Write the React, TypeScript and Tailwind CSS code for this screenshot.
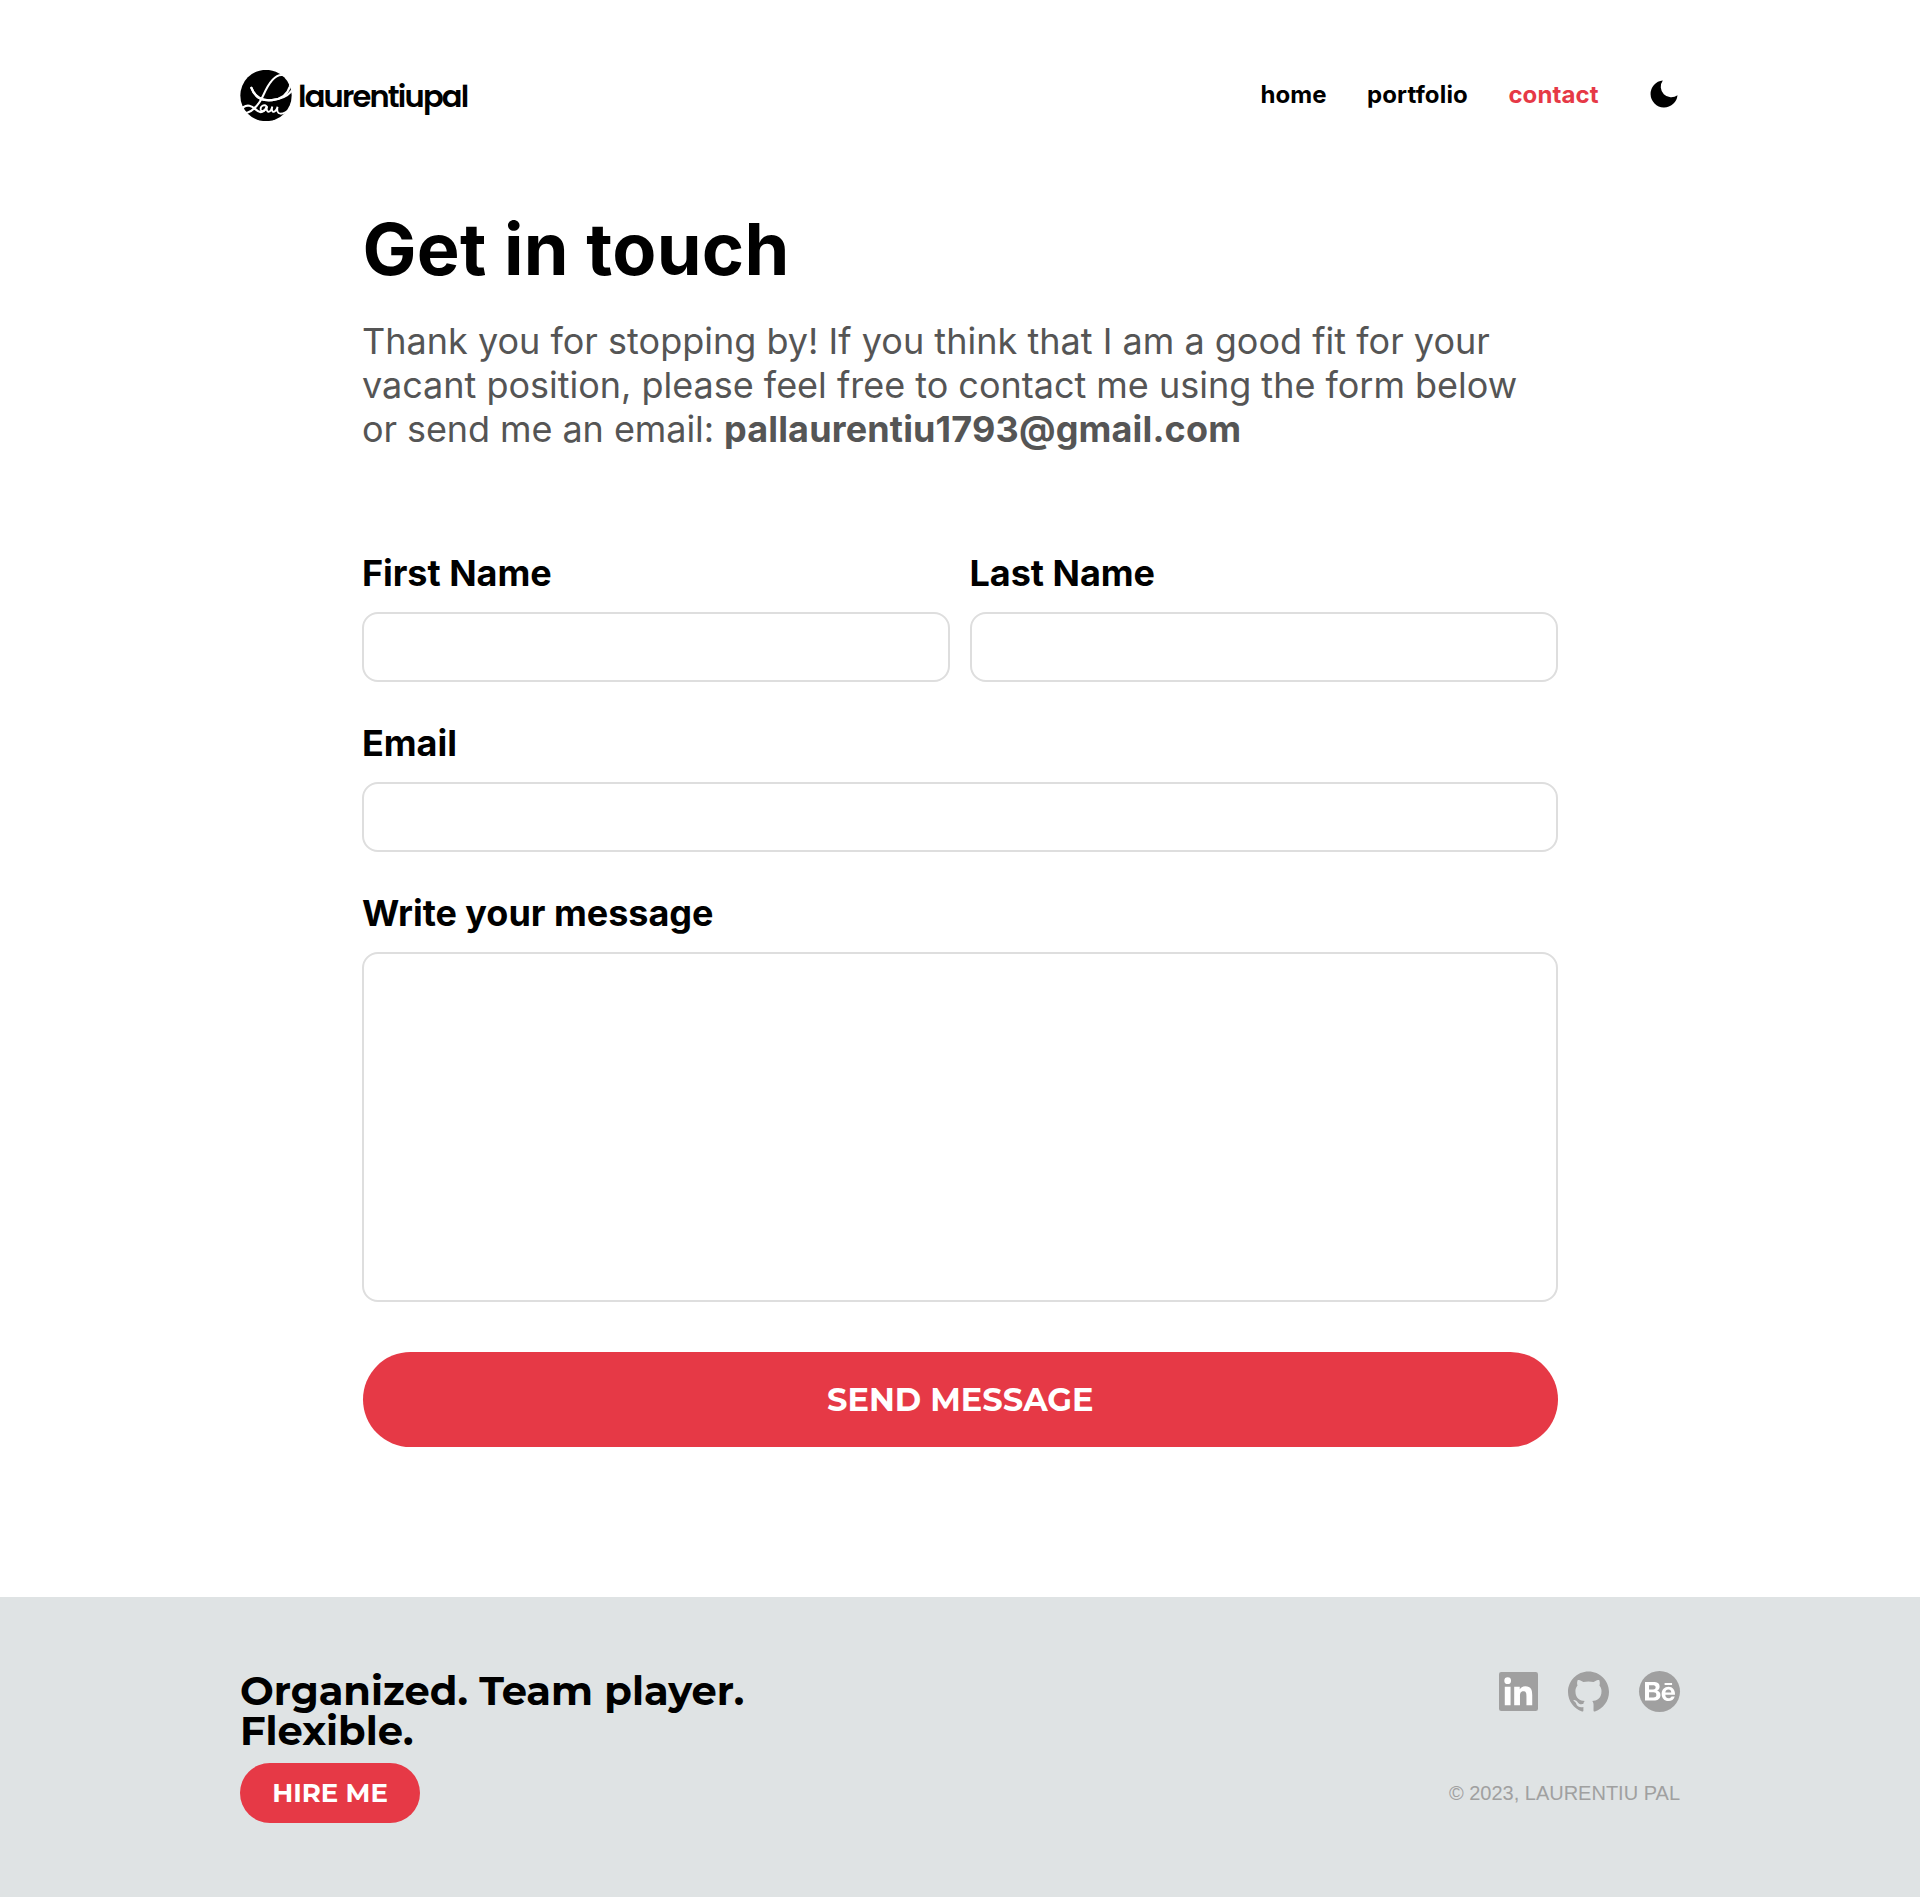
import { SiGithub } from "react-icons/si";
import { FaBehance } from "react-icons/fa";

function LogoMark() {
  return (
    <svg viewBox="0 0 156 154" className="h-[51px] w-[52px] overflow-hidden" fill="none" stroke="#fff" strokeLinecap="round">
      <circle cx="78" cy="77" r="77.5" fill="#000" stroke="none" />
      <path d="M34 54C44 82 66 94 96 91C124 88 146 77 158 60" strokeWidth="7" />
      <path
        d="M34 54C44 82 66 94 96 91C120 89 142 76 150 50C155 30 144 15 126 15C102 14 84 44 70 76C62 94 54 106 42 116C30 128 14 134 8 124C4 114 14 106 28 108C44 111 48 126 62 127C70 127 76 120 80 112"
        strokeWidth="6.5"
      />
      <path
        d="M80 110C72 102 60 110 62 119C65 129 77 124 81 110C79 120 81 127 87 126C93 124 95 118 97 110C94 122 97 128 103 126C108 124 111 118 113 111C110 122 112 131 122 132C134 132 142 126 152 116"
        strokeWidth="5.5"
      />
    </svg>
  );
}

function MoonIcon() {
  return (
    <svg viewBox="0 0 24 24" className="size-9" fill="#000">
      <path d="M21 12.79A9 9 0 1 1 11.21 3 7 7 0 0 0 21 12.79z" />
    </svg>
  );
}

function LinkedInIcon() {
  return (
    <svg viewBox="0 0 24 24" className="size-[39px]">
      <rect width="24" height="24" rx="1.4" fill="#a0a0a0" />
      <path
        fill="#fff"
        d="M20.447 20.452h-3.554v-5.569c0-1.328-.027-3.037-1.852-3.037-1.853 0-2.136 1.445-2.136 2.939v5.667H9.351V9h3.414v1.561h.046c.477-.9 1.637-1.85 3.37-1.85 3.601 0 4.267 2.37 4.267 5.455v6.286zM5.337 7.433a2.062 2.062 0 0 1-2.063-2.065 2.064 2.064 0 1 1 2.063 2.065zM7.119 20.452H3.555V9h3.564v11.452z"
      />
    </svg>
  );
}

function Field({ label, multiline = false }: { label: string; multiline?: boolean }) {
  return (
    <label className="flex flex-1 flex-col gap-[17px]">
      <span className="-ml-[0.5px] text-4xl leading-[44px] font-bold tracking-[-0.03px]">{label}</span>
      {multiline ? (
        <textarea className="h-[350px] resize-none rounded-2xl border-2 border-[#dedede] bg-white px-5 py-4 text-2xl outline-none" />
      ) : (
        <input className="h-[70px] w-full rounded-2xl border-2 border-[#dedede] bg-white px-5 text-2xl outline-none" />
      )}
    </label>
  );
}

export default function App() {
  return (
    <div className="flex min-h-[1897px] flex-col bg-white font-['Inter',sans-serif] text-black">
      <header className="mx-auto flex h-[121px] w-[1440px] items-end justify-between pt-[70px]">
        <a href="#" className="flex h-[51px] items-center gap-1.5">
          <LogoMark />
          <span className="pt-0.5 font-['Poppins','Inter',sans-serif] text-[30.5px] leading-[30px] font-semibold tracking-[-1.8px]">
            laurentiupal
          </span>
        </a>
        <nav className="-mr-0.5 flex h-[51px] items-center pb-[2.5px] text-2xl leading-6 font-bold">
          <a href="#" className="pt-[2px]">home</a>
          <a href="#" className="ml-[40.5px] pt-[2px] tracking-[0.15px]">portfolio</a>
          <a href="#" className="ml-[40.5px] pt-[2px] tracking-[0.08px] text-[#e63946]">contact</a>
          <button type="button" aria-label="Toggle theme" className="ml-[47.5px]">
            <MoonIcon />
          </button>
        </nav>
      </header>

      <main className="mx-auto mt-[92px] flex w-[1195.2px] flex-1 flex-col">
        <h1 className="text-7xl leading-[72px] font-bold tracking-[0.3px]">Get in touch</h1>
        <p className="mt-[34px] -ml-[0.5px] text-4xl leading-[44px] text-[#555]">
          <span className="tracking-[0.015px]">Thank you for stopping by! If you think that I am a good fit for your</span>
          <br />
          <span className="tracking-[-0.01px]">vacant position, please feel free to contact me using the form below</span>
          <br />
          <span className="tracking-[-0.07px]">or send me an email: </span>
          <b className="font-bold tracking-[0.15px]">pallaurentiu1793@gmail.com</b>
        </p>

        <form className="mt-[100px] flex flex-col gap-[39px]">
          <div className="flex gap-5">
            <Field label="First Name" />
            <Field label="Last Name" />
          </div>
          <Field label="Email" />
          <Field label="Write your message" multiline />
          <button
            type="button"
            className="mt-[11px] ml-[0.6px] h-[95px] rounded-full bg-[#e63946] font-['Montserrat','Inter',sans-serif] text-[32px] leading-8 font-bold text-white"
          >
            SEND MESSAGE
          </button>
        </form>
      </main>

      <footer className="h-[300px] bg-[#dfe3e4] pt-[74px]">
        <div className="mx-auto flex h-[152px] w-[1440px] justify-between">
          <div className="flex flex-col items-start gap-3 font-['Montserrat','Inter',sans-serif]">
            <p className="text-[40px] leading-10 font-bold">
              Organized. Team player.
              <br />
              Flexible.
            </p>
            <button type="button" className="h-[60px] w-[180px] rounded-full bg-[#e63946] text-[26px] leading-[26px] font-bold text-white">
              HIRE ME
            </button>
          </div>
          <div className="flex flex-col items-end justify-between">
            <div className="flex h-[41px] items-center gap-[30px]">
              <LinkedInIcon />
              <SiGithub className="size-[41px] text-[#a0a0a0]" />
              <span className="flex size-[41px] items-center justify-center rounded-full bg-[#a0a0a0]">
                <FaBehance className="h-[27px] w-[30px] text-white" />
              </span>
            </div>
            <p className="font-['Liberation_Sans',Arial,sans-serif] text-xl leading-[60px] text-[#a0a0a0]">
              © 2023, LAURENTIU PAL
            </p>
          </div>
        </div>
      </footer>
    </div>
  );
}
